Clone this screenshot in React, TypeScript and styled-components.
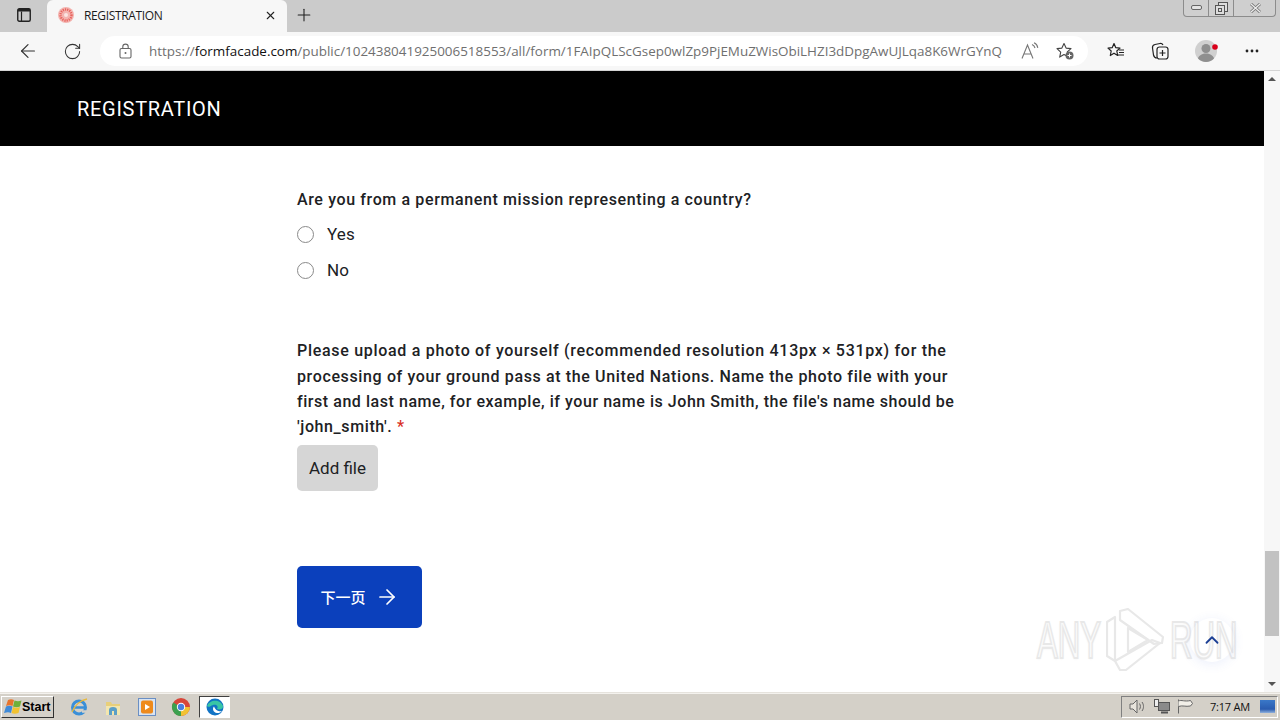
import React from 'react'
import styled, { createGlobalStyle } from 'styled-components'
import { ArrowRight, ChevronUp, Plus, RotateCw, X, ArrowLeft } from 'lucide-react'

const GlobalStyle = createGlobalStyle`
  html, body {
    margin: 0;
    padding: 0;
    overflow: hidden;
    background: #fff;
  }
  * {
    box-sizing: border-box;
  }
`

const Screen = styled.div`
  width: 1280px;
  height: 720px;
  position: relative;
  display: flex;
  flex-direction: column;
  overflow: hidden;
  font-family: Roboto, 'Liberation Sans', sans-serif;
`

const TabStrip = styled.div`
  height: 32px;
  flex: none;
  background: #cbcbcb;
  display: flex;
  align-items: flex-start;
  padding-left: 13px;
  position: relative;
`

const TabAction = styled.div`
  width: 22px;
  height: 30px;
  display: flex;
  align-items: center;
  justify-content: center;
  margin-right: 12px;
`

const Tab = styled.div`
  width: 240px;
  height: 32px;
  background: #f7f7f7;
  border-radius: 6px 6px 0 0;
  display: flex;
  align-items: center;
  padding: 0 10px 2px 10px;
  font-family: 'Open Sans', sans-serif;
  font-size: 12px;
  letter-spacing: -0.35px;
  color: #1c1c1c;
`

const TabTitle = styled.span`
  margin-left: 9px;
  flex: 1;
`

const NewTab = styled.div`
  width: 34px;
  height: 30px;
  display: flex;
  align-items: center;
  justify-content: center;
`

const WindowButtons = styled.div`
  position: absolute;
  right: 4px;
  top: 0;
  width: 93px;
  height: 17px;
  display: grid;
  grid-template-columns: 25px 25px 43px;
  border: 1px solid #8c8c8c;
  border-top: none;
  border-radius: 0 0 4px 4px;
  background: #cfcfcf;
`

const WindowButton = styled.div`
  display: flex;
  align-items: center;
  justify-content: center;
  border-right: 1px solid #8c8c8c;
  &:last-child {
    border-right: none;
  }
`

const Toolbar = styled.div`
  height: 39px;
  flex: none;
  background: #f7f7f7;
  border-bottom: 1px solid #d4d4d4;
  display: flex;
  align-items: center;
`

const ToolbarIcon = styled.div<{ $w: number; $shift?: number }>`
  width: ${(p) => p.$w}px;
  height: 38px;
  flex: none;
  display: flex;
  align-items: center;
  justify-content: center;
  padding-left: ${(p) => p.$shift ?? 0}px;
  color: #333;
`

const AddressBar = styled.div`
  width: 988px;
  height: 30px;
  margin: 0 6px;
  background: #fff;
  border-radius: 15px;
  display: flex;
  align-items: center;
  padding-left: 18px;
  flex: none;
`

const Url = styled.div`
  margin-left: 16px;
  width: 856px;
  flex: none;
  overflow: hidden;
  white-space: nowrap;
  font-family: 'Open Sans', sans-serif;
  font-size: 13.43px;
  color: #6f6f6f;
  b {
    font-weight: 400;
    color: #111;
  }
`

const AddressEnd = styled.div`
  flex: 1;
  display: flex;
  align-items: center;
  gap: 15px;
  padding-left: 16px;
`

const Viewport = styled.div`
  flex: 1;
  min-height: 0;
  display: flex;
  background: #fff;
`

const Page = styled.main`
  flex: 1;
  min-width: 0;
`

const Header = styled.header`
  height: 75px;
  background: #000;
  color: #fff;
  display: flex;
  align-items: center;
  padding-left: 77px;
  font-size: 20px;
  letter-spacing: 0.7px;
`

const Form = styled.div`
  width: 672px;
  margin-left: 297px;
  padding-top: 41px;
  color: #202124;
`

const Question = styled.div`
  font-size: 16px;
  font-weight: 500;
  line-height: 25.3px;
`

const QuestionLine = styled.div<{ $spacing: number }>`
  white-space: nowrap;
  letter-spacing: ${(p) => p.$spacing}px;
`

const Required = styled.span`
  color: #d93025;
`

const Options = styled.div`
  margin-top: 4px;
  height: 72px;
  display: grid;
  grid-auto-rows: 36px;
`

const Option = styled.label`
  display: flex;
  align-items: center;
  font-size: 17px;
  letter-spacing: 0.1px;
`

const Radio = styled.span`
  width: 17px;
  height: 17px;
  margin-right: 13px;
  border-radius: 50%;
  border: 1px solid #8a8a8a;
  background: #fff;
`

const UploadBlock = styled.div`
  margin-top: 50px;
`

const AddFile = styled.button`
  display: block;
  margin-top: 6px;
  width: 81px;
  height: 46px;
  padding: 0;
  border: none;
  border-radius: 5px;
  background: #d6d6d6;
  font-family: Roboto, sans-serif;
  font-size: 17px;
  color: #202124;
`

const NextButton = styled.button`
  margin-top: 75px;
  width: 125px;
  height: 62px;
  border: none;
  border-radius: 5px;
  background: #0b40bc;
  color: #fff;
  display: flex;
  align-items: center;
  justify-content: center;
  gap: 9px;
  font-family: 'Noto Sans CJK SC', sans-serif;
  font-size: 15px;
  font-weight: 500;
`

const ButtonLabel = styled.span`
  position: relative;
  top: -1px;
`

const Scrollbar = styled.div`
  width: 16px;
  flex: none;
  background: #f7f7f7;
  display: flex;
  flex-direction: column;
  align-items: center;
`

const ScrollArrow = styled.div<{ $down?: boolean }>`
  flex: none;
  height: 16px;
  width: 100%;
  display: flex;
  align-items: center;
  justify-content: center;
  &::before {
    content: '';
    border-left: 4px solid transparent;
    border-right: 4px solid transparent;
    ${(p) => (p.$down ? 'border-top: 4px solid #555;' : 'border-bottom: 4px solid #555;')}
  }
`

const ScrollTrack = styled.div`
  flex: 1;
  width: 100%;
  display: flex;
  flex-direction: column;
  justify-content: flex-end;
  padding-bottom: 40px;
`

const ScrollThumb = styled.div`
  height: 85px;
  background: #c2c2c2;
  margin: 0 1px;
`

const Watermark = styled.div`
  position: absolute;
  left: 1037px;
  top: 608px;
  width: 196px;
  height: 64px;
  display: flex;
  align-items: center;
  justify-content: space-between;
  pointer-events: none;
`

const WatermarkWord = styled.span`
  width: 63px;
  display: block;
  white-space: nowrap;
  overflow: visible;
  transform: scaleX(0.6);
  transform-origin: left center;
  font-family: 'Liberation Sans', sans-serif;
  font-size: 52px;
  line-height: 64px;
  color: #fbfbfb;
  -webkit-text-stroke: 2px #e8e8e8;
  text-shadow: 0 1px 3px #eeeeee;
`

const BackToTop = styled.div`
  position: absolute;
  left: 1190px;
  top: 618px;
  width: 44px;
  height: 44px;
  border-radius: 50%;
  display: flex;
  align-items: center;
  justify-content: center;
  color: #1c3f94;
  box-shadow: 0 2px 12px rgba(60, 100, 220, 0.1);
`

const Taskbar = styled.footer`
  height: 28px;
  flex: none;
  background: #d4d0c8;
  border-top: 1px solid #e6e3dd;
  box-shadow: inset 0 1px 0 #f4f2ee;
  display: flex;
  align-items: center;
  font-family: 'Liberation Sans', sans-serif;
`

const StartButton = styled.div`
  margin-left: 1px;
  width: 53px;
  height: 22px;
  display: flex;
  align-items: center;
  gap: 0;
  padding-left: 2px;
  background: #d4d0c8;
  border: 1px solid;
  border-color: #fff #303030 #303030 #fff;
  font-size: 12.5px;
  font-weight: 700;
  color: #000;
`

const QuickLaunch = styled.div`
  display: flex;
  align-items: center;
  margin-left: 15px;
  gap: 14px;
`

const TaskIcon = styled.div<{ $active?: boolean }>`
  width: ${(p) => (p.$active ? 31 : 20)}px;
  height: ${(p) => (p.$active ? 22 : 20)}px;
  display: flex;
  align-items: center;
  justify-content: center;
  ${(p) =>
    p.$active &&
    `
    margin-left: -6px;
    background: #fff;
    border: 1px solid;
    border-color: #404040 #fff #fff #404040;
  `}
`

const Tray = styled.div`
  margin-left: auto;
  margin-right: 2px;
  width: 157px;
  height: 22px;
  display: flex;
  align-items: center;
  padding-left: 7px;
  border: 1px solid;
  border-color: #808080 #fff #fff #808080;
  font-family: 'Open Sans', sans-serif;
  font-size: 11px;
  letter-spacing: -0.2px;
  color: #111;
`

const TrayIcons = styled.div`
  display: flex;
  align-items: center;
  gap: 7px;
`

const Clock = styled.span`
  margin-left: 16px;
  white-space: nowrap;
`

const ShowDesktop = styled.div`
  margin-left: auto;
  margin-right: 2px;
  width: 15px;
  height: 13px;
  background: linear-gradient(#3a78c8, #2a5cb0 70%, #8fb0dc);
`

const SidebarIcon = () => (
  <svg width="14" height="14" viewBox="0 0 14 14" fill="none">
    <rect x="0.75" y="0.75" width="12.5" height="12.5" rx="1.5" stroke="#222" strokeWidth="1.4" />
    <rect x="1" y="1" width="12" height="2.5" fill="#222" />
    <path d="M4.5 3.5V13" stroke="#222" strokeWidth="1.2" />
  </svg>
)

const Favicon = () => (
  <svg width="18" height="18" viewBox="0 0 18 18">
    <circle cx="9" cy="9" r="8" fill="#f3b4b0" />
    <circle cx="9" cy="9" r="5.5" fill="none" stroke="#e8625c" strokeWidth="2.4" strokeDasharray="1.2 1" />
    <circle cx="9" cy="9" r="2" fill="#fbe4e2" />
  </svg>
)

const LockIcon = () => (
  <svg width="15" height="16" viewBox="0 0 15 16" fill="none" stroke="#666" strokeWidth="1.1">
    <rect x="2" y="5.500" width="11" height="9.500" rx="1.500" />
    <path d="M4.800 5.500V3.800a2.700 2.700 0 0 1 5.400 0v1.700" />
    <circle cx="7.500" cy="10" r="1" fill="#666" stroke="none" />
  </svg>
)

const MinimizeIcon = () => (
  <svg width="11" height="6" viewBox="0 0 11 6">
    <rect x="0.5" y="0.5" width="10" height="4" rx="1.5" fill="#e4e4e4" stroke="#666" />
  </svg>
)

const RestoreIcon = () => (
  <svg width="13" height="13" viewBox="0 0 13 13" fill="none" stroke="#555">
    <rect x="3.5" y="0.5" width="9" height="9" fill="#ddd" />
    <rect x="0.5" y="3.5" width="9" height="9" fill="#ddd" />
    <rect x="3.5" y="6.5" width="3" height="3" />
  </svg>
)

const CloseIcon = () => (
  <svg width="13" height="10" viewBox="0 0 13 10" fill="none">
    <path d="M2 1l9 8M11 1L2 9" stroke="#777" strokeWidth="3" />
    <path d="M2 1l9 8M11 1L2 9" stroke="#eee" strokeWidth="1.2" />
  </svg>
)

const ReadAloudIcon = () => (
  <svg width="19" height="18" viewBox="0 0 19 18" fill="none" stroke="#777" strokeWidth="1.100">
    <path d="M1 16.500L6.500 3l5.500 13.500M3 12h7" />
    <path d="M11 2.500c1.600.6 2.600 1.800 3 3.500M13 .8c2 .8 3.400 2.600 3.800 5" />
  </svg>
)

const FavoriteAddIcon = () => (
  <svg width="20" height="20" viewBox="0 0 20 20" fill="none">
    <path
      d="M9 2.5l2.1 4.6 4.9.5-3.7 3.3 1 4.9L9 13.6l-4.3 2.5 1-4.9L2 7.6l4.9-.5L9 2.5z"
      stroke="#444"
      strokeWidth="1.1"
      strokeLinejoin="round"
    />
    <circle cx="14.5" cy="14.5" r="4" fill="#666" />
    <path d="M14.5 12.5v4M12.5 14.5h4" stroke="#fff" strokeWidth="1" />
  </svg>
)

const FavoritesIcon = () => (
  <svg width="20" height="20" viewBox="0 0 20 20" fill="none" stroke="#222" strokeWidth="1.2">
    <path d="M8 2.5l1.8 4.2 4.2.4-3.2 2.9.9 4.5L8 12.2l-3.7 2.3.9-4.5L2 7.1l4.2-.4L8 2.5z" strokeLinejoin="round" />
    <path d="M13 9h5M13 11.5h5M12 14h6" />
  </svg>
)

const CollectionsIcon = () => (
  <svg width="20" height="20" viewBox="0 0 20 20" fill="none" stroke="#222" strokeWidth="1.2">
    <path d="M7 17c-2 0-3-1-3.500-3L2.500 7c-.3-2 .5-3 2.500-3.500L10 2.500c1.500-.2 2.500.5 3 1.500" />
    <rect x="7" y="6" width="11" height="12" rx="2.500" fill="#f7f7f7" />
    <path d="M12.500 9v6M9.500 12h6" />
  </svg>
)

const ProfileIcon = () => (
  <svg width="28" height="28" viewBox="0 0 28 28">
    <circle cx="14" cy="14" r="11" fill="#d0d0d0" />
    <circle cx="14" cy="11.500" r="4.500" fill="#8f8f8f" />
    <path d="M6 21.500c1-3.500 4.500-5 8-5s7 1.500 8 5c-2 2-5 3.500-8 3.500s-6-1.500-8-3.500z" fill="#8f8f8f" />
    <circle cx="23" cy="10" r="2.800" fill="#d9001b" />
  </svg>
)

const MoreIcon = () => (
  <svg width="14" height="4" viewBox="0 0 14 4" fill="#222">
    <circle cx="2" cy="2" r="1.400" />
    <circle cx="7" cy="2" r="1.400" />
    <circle cx="12" cy="2" r="1.400" />
  </svg>
)

const WindowsFlag = () => (
  <svg width="18" height="18" viewBox="0 0 18 18">
    <path d="M4 2c2-1 4-1 6 0L8.500 8c-2-1-4-1-6.500 0z" fill="#e8742c" />
    <path d="M10.500 2.500c2.500 1 4.500 1 7 0L16 8.500c-2.500 1-4.500 1-7 0z" fill="#6fb03a" />
    <path d="M2 8.500c2-1 4.500-1 6.500 0L7 15c-2-1-4-1-7 0z" fill="#3f8ad8" />
    <path d="M9 9c2 1 4.500 1 7 0l-1.500 6c-2.500 1-5 1-7 0z" fill="#f2c230" />
  </svg>
)

const IeIcon = () => (
  <svg width="20" height="20" viewBox="0 0 20 20" fill="none">
    <circle cx="10" cy="10.500" r="6.500" stroke="#3a8fd8" strokeWidth="3" />
    <path d="M4 10.500h12" stroke="#3a8fd8" strokeWidth="2.500" />
    <path d="M13 14.500h5" stroke="#d4d0c8" strokeWidth="2.500" />
    <path d="M3 15C6 8 12 3 18 2" stroke="#e8b93c" strokeWidth="1.300" />
  </svg>
)

const ExplorerIcon = () => (
  <svg width="20" height="20" viewBox="0 0 20 20">
    <path d="M3 5h5l1 2h8v11H3z" fill="#e8cf7a" />
    <rect x="3" y="9" width="14" height="9" fill="#f3e6ae" />
    <path d="M6 18v-5a4 3 0 0 1 8 0v5h-3v-4H9v4z" fill="#5b9fc7" />
  </svg>
)

const MediaIcon = () => (
  <svg width="20" height="20" viewBox="0 0 20 20">
    <rect x="1.500" y="1.500" width="17" height="17" fill="#d9e4f2" stroke="#6a8fc4" />
    <rect x="4" y="3.500" width="12" height="13" rx="2" fill="#ee8a1c" />
    <path d="M8 7l5 3-5 3z" fill="#fff" />
  </svg>
)

const ChromeIcon = () => (
  <svg width="20" height="20" viewBox="0 0 20 20">
    <circle cx="10" cy="10" r="9" fill="#d8463a" />
    <path d="M10 10L2.200 5.500A9 9 0 0 0 10 19z" fill="#3ca04f" />
    <path d="M10 10h9a9 9 0 0 1-9 9z" fill="#f2c232" />
    <circle cx="10" cy="10" r="4.200" fill="#fff" />
    <circle cx="10" cy="10" r="3.200" fill="#4a7fe0" />
  </svg>
)

const EdgeIcon = () => (
  <svg width="18" height="18" viewBox="0 0 18 18">
    <circle cx="9" cy="9" r="8.500" fill="#1173c4" />
    <path d="M1 8C3 2 14 0 17 8c.5 3-3 4-6 3 2-3-1-5-4-4-3 1-4 3-6 1z" fill="#39c5a5" />
    <path d="M8 8.500c-2 2-1 6 3 6.500 2 .2 3.500-.5 5-2-2 .5-6 .5-8-4.500z" fill="#fff" />
  </svg>
)

const SpeakerIcon = () => (
  <svg width="17" height="15" viewBox="0 0 17 15" fill="none" stroke="#666">
    <path d="M1 5h3l4-4v13l-4-4H1z" fill="#e8e4dc" />
    <path d="M10.500 4.500c1.200 2 1.200 4 0 6M13 3c2 2.800 2 6.200 0 9" />
  </svg>
)

const NetworkIcon = () => (
  <svg width="17" height="15" viewBox="0 0 17 15" fill="none" stroke="#555">
    <rect x="5.500" y="3.500" width="11" height="8" fill="#8a8a8a" />
    <rect x="1.500" y="0.500" width="4" height="7" fill="#eee" />
    <path d="M8 13.500h7" strokeWidth="2" />
  </svg>
)

const FlagIcon = () => (
  <svg width="17" height="15" viewBox="0 0 17 15" fill="none" stroke="#666">
    <path d="M1.500 0.500v14" />
    <path d="M1.500 2c3-1.500 6 1 12-0.500l2 3-2 2.500c-5 1-8-1-12 .5" fill="#f2efe8" />
  </svg>
)

const PlayMark = () => (
  <svg width="58" height="64" viewBox="0 0 58 64" fill="none" stroke="#e8e8e8" strokeWidth="2.200" strokeLinejoin="round">
    <path d="M1 14l8-5v44l-8-5z" />
    <path d="M14 3l8-2 35 28-1 6-8 1L14 12z" />
    <path d="M9 53l37-21 8 3-34 27h-6z" />
    <path d="M22 20v24l20-12z" />
  </svg>
)

const App = () => (
  <>
    <GlobalStyle />
    <Screen>
      <TabStrip>
        <TabAction>
          <SidebarIcon />
        </TabAction>
        <Tab>
          <Favicon />
          <TabTitle>REGISTRATION</TabTitle>
          <X size={13} color="#222" strokeWidth={2} />
        </Tab>
        <NewTab>
          <Plus size={20} color="#222" strokeWidth={1.3} />
        </NewTab>
        <WindowButtons>
          <WindowButton>
            <MinimizeIcon />
          </WindowButton>
          <WindowButton>
            <RestoreIcon />
          </WindowButton>
          <WindowButton>
            <CloseIcon />
          </WindowButton>
        </WindowButtons>
      </TabStrip>
      <Toolbar>
        <ToolbarIcon $w={50} $shift={6}>
          <ArrowLeft size={22} strokeWidth={1.3} />
        </ToolbarIcon>
        <ToolbarIcon $w={44}>
          <RotateCw size={19} strokeWidth={1.3} />
        </ToolbarIcon>
        <AddressBar>
          <LockIcon />
          <Url>
            https://<b>formfacade.com</b>
            /public/102438041925006518553/all/form/1FAIpQLScGsep0wlZp9PjEMuZWisObiLHZI3dDpgAwUJLqa8K6WrGYnQ
          </Url>
          <AddressEnd>
            <ReadAloudIcon />
            <FavoriteAddIcon />
          </AddressEnd>
        </AddressBar>
        <ToolbarIcon $w={44}>
          <FavoritesIcon />
        </ToolbarIcon>
        <ToolbarIcon $w={44}>
          <CollectionsIcon />
        </ToolbarIcon>
        <ToolbarIcon $w={48}>
          <ProfileIcon />
        </ToolbarIcon>
        <ToolbarIcon $w={44}>
          <MoreIcon />
        </ToolbarIcon>
      </Toolbar>
      <Viewport>
        <Page>
          <Header>REGISTRATION</Header>
          <Form>
            <Question>
              <QuestionLine $spacing={0.62}>
                Are you from a permanent mission representing a country?
              </QuestionLine>
            </Question>
            <Options>
              <Option>
                <Radio />
                Yes
              </Option>
              <Option>
                <Radio />
                No
              </Option>
            </Options>
            <UploadBlock>
              <Question>
                <QuestionLine $spacing={0.7}>
                  Please upload a photo of yourself (recommended resolution 413px × 531px) for the
                </QuestionLine>
                <QuestionLine $spacing={0.63}>
                  processing of your ground pass at the United Nations. Name the photo file with your
                </QuestionLine>
                <QuestionLine $spacing={0.55}>
                  first and last name, for example, if your name is John Smith, the file's name should be
                </QuestionLine>
                <QuestionLine $spacing={0.6}>
                  'john_smith'. <Required>*</Required>
                </QuestionLine>
              </Question>
              <AddFile>Add file</AddFile>
            </UploadBlock>
            <NextButton>
              <ButtonLabel>下一页</ButtonLabel>
              <ArrowRight size={24} strokeWidth={1.7} />
            </NextButton>
          </Form>
        </Page>
        <Scrollbar>
          <ScrollArrow />
          <ScrollTrack>
            <ScrollThumb />
          </ScrollTrack>
          <ScrollArrow $down />
        </Scrollbar>
      </Viewport>
      <Taskbar>
        <StartButton>
          <WindowsFlag />
          Start
        </StartButton>
        <QuickLaunch>
          <TaskIcon>
            <IeIcon />
          </TaskIcon>
          <TaskIcon>
            <ExplorerIcon />
          </TaskIcon>
          <TaskIcon>
            <MediaIcon />
          </TaskIcon>
          <TaskIcon>
            <ChromeIcon />
          </TaskIcon>
          <TaskIcon $active>
            <EdgeIcon />
          </TaskIcon>
        </QuickLaunch>
        <Tray>
          <TrayIcons>
            <SpeakerIcon />
            <NetworkIcon />
            <FlagIcon />
          </TrayIcons>
          <Clock>7:17 AM</Clock>
          <ShowDesktop />
        </Tray>
      </Taskbar>
      <Watermark>
        <WatermarkWord>ANY</WatermarkWord>
        <PlayMark />
        <WatermarkWord>RUN</WatermarkWord>
      </Watermark>
      <BackToTop>
        <ChevronUp size={22} strokeWidth={2} />
      </BackToTop>
    </Screen>
  </>
)

export default App
